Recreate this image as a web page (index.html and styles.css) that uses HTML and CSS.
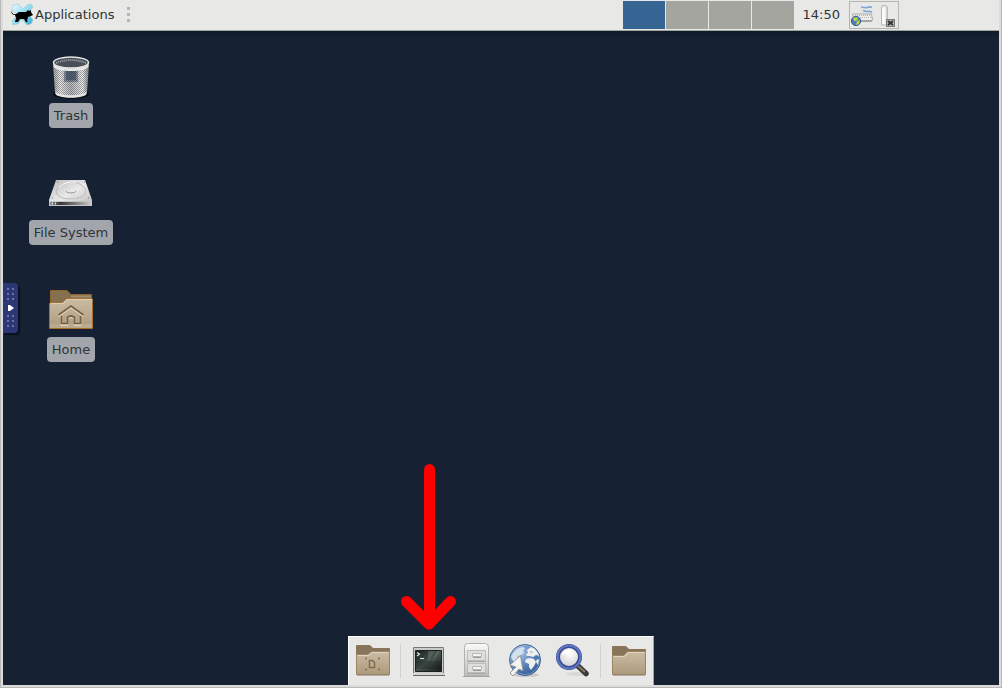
FILE: index.html
```html
<!DOCTYPE html>
<html lang="en">
<head>
<meta charset="utf-8">
<title>Desktop</title>
<link rel="stylesheet" href="styles.css">
</head>
<body>
<div class="screen">
  <header class="panel">
    <button class="menu-button" type="button">
      <svg width="24" height="24" viewBox="0 0 24 24" aria-hidden="true">
        <defs><linearGradient id="xg" x1="0" y1="0" x2="1" y2="1"><stop offset="0" stop-color="#e8fbff"/><stop offset=".45" stop-color="#9adff2"/><stop offset="1" stop-color="#34a8d8"/></linearGradient></defs>
        <path d="M3 3l5-1 5 5 4-4 4-1 2 3-5 6 5 7-2 4-4 1-5-6-4 5-5 1-1-4 5-6-5-6z" fill="url(#xg)" stroke="#a9c6cf" stroke-width=".6"/>
        <path d="M1 8q1 5 5 4l3-2 7 0 2-2 1 1 2-1 0 2 2 3-2 1-3 1-1 4 1 1-2 0-2-3-4 0-2 3-3 0 1-4-1-3q-4 0-4-5z" fill="#000"/>
      </svg>
      <span>Applications</span>
    </button>
    <span class="grip"><i></i><i></i><i></i></span>
    <nav class="pager" aria-label="Workspaces">
      <button class="workspace workspace-active" type="button" aria-label="Workspace 1"></button>
      <button class="workspace" type="button" aria-label="Workspace 2"></button>
      <button class="workspace" type="button" aria-label="Workspace 3"></button>
      <button class="workspace" type="button" aria-label="Workspace 4"></button>
    </nav>
    <time class="clock">14:50</time>
    <div class="tray">
      <svg width="24" height="24" viewBox="0 0 24 24" aria-hidden="true">
        <path d="M11 4.500c3-1 4 1 6 0s3-1 5 0M13 7.500c3 2 5 0 9 1.500" fill="none" stroke="#7fa6d6" stroke-width="1.600"/>
        <path d="M2.500 11h19l1 6-1 1H4z" fill="#eeeeec" stroke="#999b96" stroke-width=".8"/>
        <path d="M5 12.500h16M6 14.500h16" stroke="#b3b5b0" stroke-dasharray="1 1"/>
        <path d="M5 18h17" stroke="#7c7e79"/>
        <circle cx="6" cy="18" r="4.600" fill="#4f7cba" stroke="#315991"/>
        <path d="M3 15l4-1 1 2-2 2-2 0zM7 18l3-1-1 4-3 1z" fill="#c0d43d"/>
      </svg>
      <svg width="24" height="24" viewBox="0 0 24 24" aria-hidden="true">
        <path d="M8 4V2.500h4V4h1.500v18h-6V4z" fill="#ededeb" stroke="#b9bab7"/>
        <path d="M9.500 5v16" stroke="#fff" stroke-width="2"/><path d="M12.500 5v16" stroke="#d5d6d3"/>
        <rect x="12.500" y="16.500" width="8" height="7" fill="#b4b6af" stroke="#777974"/>
        <path d="M14 18l5 4M19 18l-5 4" stroke="#2d2f2e" stroke-width="1.700"/>
      </svg>
    </div>
  </header>

  <main class="desktop">
    <button class="drawer-handle" type="button" aria-label="Show control bar">
      <span class="dots"></span>
      <svg width="6" height="8" viewBox="0 0 6 8" aria-hidden="true"><path d="M0 1h2l4 3-4 3H0z" fill="#fff"/></svg>
      <span class="dots"></span>
    </button>

    <div class="icons">
      <button class="desktop-icon" type="button">
        <svg width="48" height="48" viewBox="0 0 48 48" aria-hidden="true">
          <defs>
            <pattern id="mesh" width="2" height="2" patternUnits="userSpaceOnUse"><path d="M0 0h1v1H0zM1 1h1v1H1z" fill="#4b5158"/></pattern>
            <linearGradient id="can" x1="0" x2="1"><stop offset="0" stop-color="#a0a09e"/><stop offset=".2" stop-color="#f0f0ee"/><stop offset=".5" stop-color="#b8b8b8"/><stop offset=".82" stop-color="#f3f3f1"/><stop offset="1" stop-color="#888"/></linearGradient>
          </defs>
          <ellipse cx="24" cy="41" rx="18" ry="5" fill="#080d15"/>
          <path d="M6 11l2 28c0 7 32 7 32 0l2-28z" fill="url(#can)"/>
          <path d="M6 11l2 28c0 7 32 7 32 0l2-28z" fill="url(#mesh)" opacity=".55"/>
          <path d="M17 16h14v13H17z" fill="#1b2d4c" opacity=".4"/>
          <path d="M19 17h10v10H19z" fill="#1b2d4c" opacity=".4"/>
          <path d="M8.500 38.500c3 5 28 5 31 0v2.500c-3 5-28 5-31 0z" fill="#e4e4e2"/>
          <ellipse cx="24" cy="9.500" rx="17.500" ry="5.500" fill="#434c58"/>
          <ellipse cx="24" cy="9.500" rx="17.500" ry="5.500" fill="url(#mesh)"/>
          <path d="M9 10q15-6 30 0" stroke="#a3a8ad" stroke-width="2" stroke-dasharray="1 1" fill="none"/>
          <ellipse cx="24" cy="9.500" rx="17.500" ry="5.500" fill="none" stroke="#e6e6e4" stroke-width="1.500"/>
          <path d="M6.500 11c3 6 32 6 35 0v2.500c-3 6-32 6-35 0z" fill="#e9e9e7"/>
        </svg>
        <span class="label">Trash</span>
      </button>
      <button class="desktop-icon" type="button">
        <svg width="48" height="48" viewBox="0 0 48 48" aria-hidden="true">
          <defs>
            <linearGradient id="disk" x1="0" y1="0" x2="1" y2="1"><stop offset="0" stop-color="#b9b9b9"/><stop offset=".5" stop-color="#e9e9e9"/><stop offset="1" stop-color="#bbb"/></linearGradient>
            <linearGradient id="front" x1="0" x2="1"><stop offset="0" stop-color="#999"/><stop offset=".25" stop-color="#343434"/><stop offset=".6" stop-color="#777"/><stop offset="1" stop-color="#ccc"/></linearGradient>
          </defs>
          <path d="M9 10h29l7 20v6H2v-6z" fill="url(#disk)"/>
          <path d="M2.500 31.500h42v4h-42z" fill="url(#front)" stroke="#c5c5c5"/>
          <path d="M5 33.500h1M8 33.500h1" stroke="#ddd" stroke-width="2"/>
          <path d="M10 24c-3-6 5-12 14-12s17 6 14 12-25 7-28 0z" fill="none" stroke="#bcbcbc"/>
          <path d="M12 17q6-6 17-5" fill="none" stroke="#fff"/>
          <path d="M19 21q0 2 5 2t5-2" fill="none" stroke="#999"/>
          <path d="M10 12h1M37 12h1M5 28h1M41 28h1" stroke="#777"/>
        </svg>
        <span class="label">File System</span>
      </button>
      <button class="desktop-icon" type="button">
        <svg width="48" height="48" viewBox="0 0 48 48" aria-hidden="true">
          <defs><linearGradient id="tan" x1="0" y1="0" x2="0" y2="1"><stop offset="0" stop-color="#cabca3"/><stop offset="1" stop-color="#ad9a7d"/></linearGradient></defs>
          <path d="M3.500 17V3.500H20l4 4h20.500V20z" fill="#85704f" stroke="#8f6329"/>
          <path d="M24 9.500h20" stroke="#a08c6c" stroke-width="2"/>
          <path d="M2.500 17q0-1.500 1.500-1.500h11.500l4-4h25q1 0 1 1v29h-43z" fill="url(#tan)" stroke="#a5712d"/>
          <path d="M4 16.500h12.500l4-4h24" fill="none" stroke="#e2d6c2" opacity=".8"/>
          <path d="M3 37h42v4H3z" fill="#cbbda4" opacity=".4"/>
          <path d="M11.500 29.500l12.500-9 12.500 9M14.500 30v8h6v-6q3.500-3 7 0v6h6v-7" fill="none" stroke="#e5dac7" stroke-width="1.500"/>
          <path d="M11.500 28l12.500-9 12.500 9M14.500 29v7.500h6v-6q3.500-3 7 0v6h6V29" fill="none" stroke="#756044" stroke-width="1.700"/>
        </svg>
        <span class="label">Home</span>
      </button>
    </div>

    <nav class="dock" aria-label="Launcher">
      <button class="launcher" type="button" aria-label="Show desktop">
        <svg width="48" height="48" viewBox="0 0 48 48" aria-hidden="true">
          <path d="M7.500 18V8.500H21l3 3h16.500V20z" fill="#88745a" stroke="#8c7557"/>
          <path d="M7.500 17.500h11l4-3h18v23h-33z" fill="url(#tan)" stroke="#9b8465"/>
          <path d="M8.500 18.500h11l4-3h16" fill="none" stroke="#e0d5c2"/>
          <path d="M20.500 23.500h3l2 2v5h-5z" fill="#bdad91" stroke="#806b4f" stroke-width="1.500"/>
          <path d="M16 21.500h2M29 21.500h2M16 32.500h2M29 32.500h2" fill="none" stroke="#806b4f" stroke-width="1.500"/>
          <path d="M8 38.500h32" stroke="#b5aea2"/>
        </svg>
      </button>
      <span class="separator"></span>
      <div class="launcher-target">
        <button class="launcher" type="button" aria-label="Terminal">
          <svg width="48" height="48" viewBox="0 0 48 48" aria-hidden="true">
            <defs><linearGradient id="crt" x1="0" y1="0" x2="1" y2="1"><stop offset="0" stop-color="#151b1a"/><stop offset=".5" stop-color="#465450"/><stop offset="1" stop-color="#161b1a"/></linearGradient></defs>
            <path d="M8.500 10.500h30v26h-30z" fill="#c9ccc6" stroke="#777a75"/>
            <path d="M10.500 13.500h26v21h-26z" fill="url(#crt)" stroke="#1b201e"/>
            <path d="M23 14h7l-7 10zM32 14h3l-9 14z" fill="#819088" opacity=".35"/>
            <path d="M11 29h25M11 31h25M11 27h25M11 25h25" stroke="#0d1110" opacity=".4"/>
            <path d="M12 15.500l2.500 1.500-2.500 2M15 21.500h4" fill="none" stroke="#e5e7e5" stroke-width="1.200"/>
            <path d="M8 36h32v2H8z" fill="#d5d7d2"/><path d="M8 38.500h32" stroke="#666863"/>
          </svg>
        </button>
        <svg class="arrow" width="56" height="166" viewBox="0 0 56 166" aria-hidden="true"><path d="M28.500 5.500V159M5.500 137.500L28 160l21.500-22.500" fill="none" stroke="#f00" stroke-width="11" stroke-linecap="round" stroke-linejoin="round"/></svg>
      </div>
      <button class="launcher" type="button" aria-label="File manager">
        <svg width="48" height="48" viewBox="0 0 48 48" aria-hidden="true">
          <defs><linearGradient id="cab" x1="0" y1="0" x2="0" y2="1"><stop offset="0" stop-color="#fafafa"/><stop offset="1" stop-color="#bfc1bb"/></linearGradient></defs>
          <path d="M11.500 38.500v-28q0-4 3-4h18q3 0 3 4v28z" fill="url(#cab)" stroke="#b0b2ad"/>
          <path d="M14.500 13.500h18v10h-18zM14.500 26.500h18v9h-18z" fill="#dfe0dc" stroke="#bbbdb8"/>
          <path d="M14 24.500h19M14 36.500h19" stroke="#a4a6a1"/>
          <path d="M19.500 16.500h9v3h-9zM19.500 29.500h9v3h-9z" fill="#f5f5f5" stroke="#b5b7b1"/>
          <path d="M20 20.500h8M20 33.500h8" stroke="#9a9d97"/><path d="M10 39.500h27" stroke="#a5a7a2"/>
        </svg>
      </button>
      <button class="launcher" type="button" aria-label="Web browser">
        <svg width="48" height="48" viewBox="0 0 48 48" aria-hidden="true">
          <defs><radialGradient id="sea" cx=".35" cy=".25" r=".8"><stop offset="0" stop-color="#a9c3e2"/><stop offset=".5" stop-color="#6088c0"/><stop offset="1" stop-color="#315b98"/></radialGradient></defs>
          <ellipse cx="25" cy="38" rx="13" ry="2" fill="#c9c9c7"/>
          <circle cx="24" cy="23" r="15.500" fill="url(#sea)" stroke="#44699f"/>
          <path d="M12 16l4-4 5-2 3 1-2 3 1 2-3 2-3 1-1 3 2 2-2 3-4-3-2-4z" fill="#d3e0ee"/>
          <path d="M26 13l4-3 4 2 3 4 1 3-3-1-3 2-3-1-3 0-1-2 2-1zM25 22l4-1 4 1 2 3-2 4-3 4-2-3 0-3-4-2zM36 22l2 1-1 5-2-3z" fill="#eff0ee"/>
          <path d="M29 14l3 1-2 1z" fill="#86a6d0"/>
          <circle cx="24" cy="23" r="14.500" fill="none" stroke="#dce8f5" opacity=".35"/>
          <path d="M19.500 18.500L22 34l-4-2-6 7-3-3 6-6-6-2z" fill="#f3f3f1" stroke="#969891"/>
        </svg>
      </button>
      <button class="launcher" type="button" aria-label="Application finder">
        <svg width="48" height="48" viewBox="0 0 48 48" aria-hidden="true">
          <defs><radialGradient id="lens" cx=".55" cy=".35" r=".7"><stop offset="0" stop-color="#fff"/><stop offset="1" stop-color="#c9cdcb"/></radialGradient></defs>
          <ellipse cx="28" cy="37" rx="11" ry="2" fill="#d9d9d7"/>
          <path d="M29 29l8 7.500" stroke="#3d3932" stroke-width="5.500" stroke-linecap="round"/>
          <path d="M29 29l7 6" stroke="#817a6c" stroke-width="2"/>
          <circle cx="20" cy="20" r="11" fill="url(#lens)" stroke="#3b4a96" stroke-width="4"/>
          <circle cx="20" cy="20" r="11.500" fill="none" stroke="#5f78c0" stroke-width="2"/>
          <path d="M12 18q4-7 12-5-2 4-12 5" fill="#fff"/>
        </svg>
      </button>
      <span class="separator"></span>
      <button class="launcher" type="button" aria-label="Home folder">
        <svg width="48" height="48" viewBox="0 0 48 48" aria-hidden="true">
          <path d="M7.500 18V9.500H21l3 3h16.500V20z" fill="#88745a" stroke="#8c7557"/>
          <path d="M7.500 18.500h11l4-4h18v23h-33z" fill="url(#tan)" stroke="#9b8465"/>
          <path d="M8.500 19.500h11l4-4h16" fill="none" stroke="#e0d5c2"/><path d="M8 38.500h32" stroke="#b5aea2"/>
        </svg>
      </button>
    </nav>
  </main>
</div>
</body>
</html>
```

FILE: styles.css
```css
* {
  box-sizing: border-box;
}

body {
  margin: 0;
  background: #dcdcda;
  color: #2e3436;
  font: 13px/17px "DejaVu Sans", sans-serif;
}

button {
  margin: 0;
  padding: 0;
  border: 0;
  background: none;
  color: inherit;
  font: inherit;
}

svg {
  display: block;
  flex: none;
}

.screen {
  display: flex;
  flex-direction: column;
  min-height: 100vh;
  padding: 0 2px 2px;
  border: solid #b8b8b8;
  border-width: 0 1px 1px;
}

.panel {
  display: flex;
  align-items: center;
  height: 31px;
  padding: 0 100px 2px 7px;
  border-bottom: 1px solid #a3a49e;
  background: #e8e8e6;
}

.menu-button {
  display: flex;
  align-items: center;
  gap: 1px;
}

.grip {
  display: flex;
  flex-direction: column;
  gap: 3px;
  margin: 0 auto 0 13px;
}

.grip i {
  width: 3px;
  height: 3px;
  background: #b5b5b1;
}

.pager {
  display: flex;
  gap: 1px;
  padding-top: 1px;
}

.workspace {
  width: 42px;
  height: 28px;
  background: #a4a59f;
}

.workspace-active {
  background: #366594;
}

.clock {
  margin: 0 9px;
}

.tray {
  display: flex;
  align-items: center;
  height: 28px;
  margin-top: 1px;
  border: 1px solid #b5b6b2;
}

.desktop {
  position: relative;
  display: flex;
  flex: 1;
  flex-direction: column;
  justify-content: space-between;
  background: linear-gradient(#101b29, #162233 8px);
}

.icons {
  display: flex;
  flex-direction: column;
  align-items: center;
  gap: 42px;
  width: 136px;
  padding-top: 22px;
}

.desktop-icon {
  display: flex;
  flex-direction: column;
  align-items: center;
  gap: 2px;
}

.label {
  padding: 4px 5px;
  border-radius: 4px;
  background: #a2a6ac;
}

.drawer-handle {
  position: absolute;
  top: 252px;
  left: 0;
  display: flex;
  flex-direction: column;
  align-items: center;
  justify-content: space-between;
  width: 15px;
  height: 50px;
  padding: 5px 0;
  border-radius: 0 4px 4px 0;
  background: #2c3875;
  box-shadow: 2px 2px 1px #0a111b;
}

.dots {
  width: 7px;
  height: 13px;
  background: radial-gradient(circle at 1px 1px, #6974aa 1px, transparent 1px) 0 0 / 5px 5px;
}

.dock {
  display: flex;
  align-self: center;
  border: 1px solid #fff;
  border-right-color: #a3a49e;
  border-bottom: 0;
  background: #e8e8e6;
}

.launcher {
  display: block;
}

.launcher-target {
  position: relative;
}

.arrow {
  position: absolute;
  bottom: 55px;
  left: -4px;
  pointer-events: none;
}

.separator {
  width: 1px;
  height: 34px;
  margin: 7px 4px 7px 3px;
  background: #d0d0cd;
}
```
